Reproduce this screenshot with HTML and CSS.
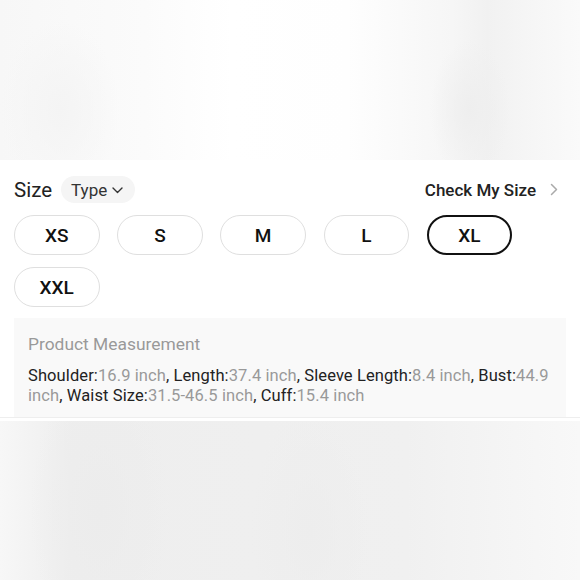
FILE: index.html
```html
<!DOCTYPE html>
<html>
<head>
<meta charset="utf-8">
<link rel="stylesheet" href="styles.css">
</head>
<body>
<div class="hero"></div>
<section class="panel">
  <div class="head">
    <div class="head-left">
      <span class="title">Size</span>
      <span class="type">Type
        <svg class="chev-down" width="11" height="7" viewBox="0 0 11 7"><path d="M1 1l4.5 4.5L10 1" fill="none" stroke="#333" stroke-width="1.4" stroke-linecap="round" stroke-linejoin="round"/></svg>
      </span>
    </div>
    <div class="check">Check My Size
      <svg class="chev-right" width="8" height="13" viewBox="0 0 8 13"><path d="M1.5 1.5l5 5-5 5" fill="none" stroke="#aaa" stroke-width="1.5" stroke-linecap="round" stroke-linejoin="round"/></svg>
    </div>
  </div>
  <div class="sizes">
    <div class="pill">XS</div>
    <div class="pill">S</div>
    <div class="pill">M</div>
    <div class="pill">L</div>
    <div class="pill active">XL</div>
    <div class="pill">XXL</div>
  </div>
  <div class="measure">
    <div class="m-title">Product Measurement</div>
    <p class="m-text"><b>Shoulder:</b><i>16.9 inch</i>, <b>Length:</b><i>37.4 inch</i>, <b>Sleeve Length:</b><i>8.4 inch</i>, <b>Bust:</b><i>44.9 inch</i>, <b>Waist Size:</b><i>31.5-46.5 inch</i>, <b>Cuff:</b><i>15.4 inch</i></p>
  </div>
</section>
<div class="footer"></div>
</body>
</html>
```

FILE: styles.css
```css
html, body {
  margin: 0;
  padding: 0;
  background: #ffffff;
  font-family: Roboto, "Liberation Sans", sans-serif;
  color: #222;
}
.hero {
  height: 160px;
  background:
    radial-gradient(ellipse 40px 70px at 470px 110px, #eeeeee, rgba(238,238,238,0)),
    radial-gradient(ellipse 60px 90px at 60px 110px, #f4f4f4, rgba(244,244,244,0)),
    linear-gradient(to right, #f7f7f7 0%, #fbfbfb 25%, #ffffff 40%, #fefefe 60%, #f6f6f6 78%, #f1f1f1 84%, #f6f6f6 92%, #fafafa 100%);
}
.panel {
  padding: 16px 14px 0;
  border-bottom: 1px solid #eeeeee;
}
.head {
  display: flex;
  align-items: center;
  justify-content: space-between;
  height: 27px;
}
.head-left {
  display: flex;
  align-items: center;
  gap: 9px;
}
.title {
  font-size: 20.5px;
  color: #222;
}
.type {
  display: flex;
  align-items: center;
  gap: 5px;
  height: 27px;
  padding: 0 12px 0 10px;
  border-radius: 14px;
  background: #f5f5f5;
  font-size: 17px;
  color: #333;
}
.chev-down { margin-top: 1px; }
.check {
  display: flex;
  align-items: center;
  gap: 14px;
  font-size: 17px;
  font-weight: 500;
  color: #222;
  padding-right: 8px;
}
.sizes {
  display: flex;
  flex-wrap: wrap;
  gap: 12px 17.7px;
  margin-top: 12px;
}
.pill {
  box-sizing: border-box;
  width: 85.5px;
  height: 40px;
  border: 1px solid #dfdfdf;
  border-radius: 20px;
  display: flex;
  align-items: center;
  justify-content: center;
  font-size: 19px;
  font-weight: 500;
  color: #111;
}
.pill.active {
  border: 2px solid #111;
}
.measure {
  margin-top: 11px;
  background: #f9f9f9;
  padding: 16px 14px 11px;
}
.m-title {
  font-size: 17.4px;
  line-height: 20px;
  color: #999;
}
.m-text {
  margin: 12px 0 0;
  font-size: 16.5px;
  letter-spacing: 0.1px;
  line-height: 20px;
}
.m-text b {
  font-weight: 400;
  color: #222;
}
.m-text i {
  font-style: normal;
  color: #999;
}
.footer {
  margin-top: 3px;
  height: 160px;
  background:
    radial-gradient(ellipse 70px 140px at 100px 90px, #ececec, rgba(236,236,236,0)),
    radial-gradient(ellipse 60px 120px at 310px 110px, #ededed, rgba(237,237,237,0)),
    linear-gradient(to right, #f7f7f7 0%, #eeeeee 12%, #efefef 45%, #f0f0f0 70%, #f4f4f4 85%, #f8f8f8 100%);
}
```
